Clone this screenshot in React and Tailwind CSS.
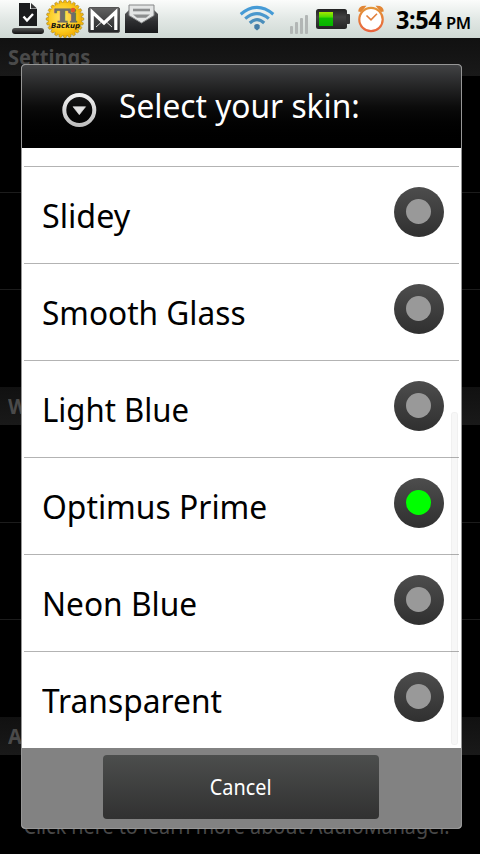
import { useState } from 'react';

const skins = [
  { name: 'Slidey', fit: 'scale-x-[0.978]' },
  { name: 'Smooth Glass', fit: 'scale-x-[0.958]' },
  { name: 'Light Blue', fit: 'scale-x-[0.942]' },
  { name: 'Optimus Prime', fit: 'scale-x-[0.964]' },
  { name: 'Neon Blue', fit: 'scale-x-[0.96]' },
  { name: 'Transparent', fit: 'scale-x-[0.962]' }
];

const DownloadIcon = () => (
  <svg width="34" height="34" viewBox="0 0 34 34">
    <defs>
      <linearGradient id="tray" x1="0" y1="0" x2="0" y2="1">
        <stop offset="0" stopColor="#555" />
        <stop offset="1" stopColor="#111" />
      </linearGradient>
    </defs>
    <path d="M8 3h11v6h7v17H8z" fill="#1b1c1e" />
    <path d="M20 3l6 5.5h-6z" fill="#333" />
    <path d="M12.5 16.5l3.5 4 6-6.5" fill="none" stroke="#fff" strokeWidth="2.4" />
    <rect x="1" y="28" width="32" height="6" rx="3" fill="url(#tray)" />
  </svg>
);

const gearTeeth = Array.from({ length: 24 }, (_, i) => i * 15);

const BackupIcon = () => (
  <svg width="40" height="38" viewBox="0 0 40 38">
    <defs>
      <radialGradient id="gold" cx="0.4" cy="0.45" r="0.65">
        <stop offset="0" stopColor="#ffe568" />
        <stop offset="0.65" stopColor="#fbc91c" />
        <stop offset="1" stopColor="#f1a900" />
      </radialGradient>
    </defs>
    {gearTeeth.map(a => (
      <path key={a} d="M18 3l1-2.8h2l1 2.8z" fill="#f6b90b" stroke="#9b7a19" strokeWidth="0.5" transform={`rotate(${a} 20 19)`} />
    ))}
    <circle cx="20" cy="19" r="16.5" fill="url(#gold)" />
    <text x="20.5" y="21.5" textAnchor="middle" fontFamily="'Liberation Serif', serif" fontWeight="bold" fontSize="18.5" textLength="22" lengthAdjust="spacingAndGlyphs" fill="#6e6e6a" stroke="#6e6e6a" strokeWidth="1.1">Ti</text>
    <circle cx="28" cy="10" r="2.3" fill="#e0542f" />
    <text x="20.5" y="27.5" textAnchor="middle" fontFamily="'DejaVu Sans', sans-serif" fontWeight="bold" fontStyle="italic" fontSize="7" textLength="29" lengthAdjust="spacingAndGlyphs" fill="#111">Backup</text>
  </svg>
);

const MailIcon = () => (
  <svg width="32" height="26" viewBox="0 0 32 26">
    <defs>
      <linearGradient id="mail" x1="0" y1="0" x2="0" y2="1">
        <stop offset="0" stopColor="#626262" />
        <stop offset="1" stopColor="#252628" />
      </linearGradient>
    </defs>
    <rect x="0.5" y="0.5" width="31" height="25" rx="1.5" fill="url(#mail)" stroke="#555" />
    <path d="M4.2 23V5l11.8 11L27.8 5v18" fill="none" stroke="#fff" strokeWidth="3.2" />
    <path d="M8 20l5-4.5M24 20l-5-4.5" stroke="#ddd" strokeWidth="1" />
  </svg>
);

const InboxIcon = () => (
  <svg width="33" height="29" viewBox="0 0 33 29">
    <defs>
      <linearGradient id="inbox" x1="0" y1="0" x2="0" y2="1">
        <stop offset="0" stopColor="#5b5c5e" />
        <stop offset="0.5" stopColor="#2d2e30" />
        <stop offset="1" stopColor="#18191b" />
      </linearGradient>
    </defs>
    <path d="M0 10l4-4h25l4 4v19H0z" fill="url(#inbox)" />
    <path d="M4 1h25v10.5L16.5 19 4 11.5z" fill="#e3e5e5" stroke="#858788" strokeWidth="1" />
    <path d="M8 6h17" stroke="#8b8d8e" strokeWidth="2.6" />
    <path d="M8 10.5h17l-4 3.2h-9z" fill="#8b8d8e" />
  </svg>
);

const WifiIcon = () => (
  <svg width="36" height="26" viewBox="0 0 36 26">
    <g fill="none" strokeWidth="3.1">
      <path d="M1.7 9.2Q18 -4.5 34.3 9.2" stroke="#459bd6" />
      <path d="M6.2 13.7Q18 3.5 29.8 13.7" stroke="#4b98cd" />
      <path d="M10.8 18Q18 11.2 25.2 18" stroke="#4b8ebb" />
    </g>
    <path d="M15.3 20.2q2.7-2.2 5.4 0v3L18 25.4l-2.7-2.2z" fill="#457da7" />
  </svg>
);

const SignalIcon = () => (
  <svg width="19" height="19" viewBox="0 0 19 19" fill="#b2b6b5">
    <rect x="0" y="11" width="3" height="8" rx="1" />
    <rect x="5" y="7" width="3" height="12" rx="1" />
    <rect x="10" y="3" width="3" height="16" rx="1" />
    <rect x="15" y="0" width="3" height="19" rx="1" />
  </svg>
);

const BatteryIcon = () => (
  <svg width="34" height="20" viewBox="0 0 34 20">
    <defs>
      <linearGradient id="shell" x1="0" y1="0" x2="0" y2="1">
        <stop offset="0" stopColor="#222" />
        <stop offset="0.4" stopColor="#414141" />
        <stop offset="1" stopColor="#242424" />
      </linearGradient>
      <linearGradient id="charge" x1="0" y1="0" x2="0" y2="1">
        <stop offset="0" stopColor="#a4e800" />
        <stop offset="0.35" stopColor="#50dc00" />
        <stop offset="0.45" stopColor="#10c000" />
        <stop offset="1" stopColor="#06b400" />
      </linearGradient>
    </defs>
    <rect width="31" height="20" rx="2.5" fill="url(#shell)" />
    <rect x="30" y="5" width="4" height="10" rx="1" fill="#333" />
    <rect x="3" y="3" width="14" height="14" fill="url(#charge)" />
  </svg>
);

const AlarmIcon = () => (
  <svg width="28" height="28" viewBox="0 0 28 28">
    <defs>
      <linearGradient id="alarm" x1="0" y1="0" x2="0" y2="1">
        <stop offset="0" stopColor="#e39538" />
        <stop offset="1" stopColor="#e9643f" />
      </linearGradient>
    </defs>
    <path d="M1.2 6.5Q1.5 0 9.5 0.8L4 7zM26.8 6.5Q26.5 0 18.5 0.8L24 7z" fill="#e28635" />
    <circle cx="14" cy="14.5" r="11.7" fill="#fff" stroke="url(#alarm)" strokeWidth="2.2" />
    <path d="M9.5 10.5l4.5 4.3 6-6" fill="none" stroke="#e2803d" strokeWidth="1.6" />
  </svg>
);

const TitleIcon = () => (
  <svg width="36" height="36" viewBox="0 0 36 36">
    <defs>
      <linearGradient id="ring" x1="0" y1="0" x2="0" y2="1">
        <stop offset="0" stopColor="#f0f0f0" />
        <stop offset="1" stopColor="#bfbfbf" />
      </linearGradient>
    </defs>
    <circle cx="18.3" cy="18" r="15" fill="none" stroke="url(#ring)" strokeWidth="4" />
    <path d="M12 14.7h12.6L18.3 22.7z" fill="#e2e2e2" stroke="#e2e2e2" strokeWidth="0.6" strokeLinejoin="round" />
  </svg>
);

const StatusBar = () => (
  <div className="flex h-[38px] items-start bg-gradient-to-b from-[#fbfcfb] via-[#e2e8e5] to-[#cfd9d4]">
    <div className="flex items-start pl-[11px]">
      <DownloadIcon />
      <BackupIcon />
      <div className="ml-[3px] mt-[7px]"><MailIcon /></div>
      <div className="ml-[5px] mt-[4px]"><InboxIcon /></div>
    </div>
    <div className="ml-auto flex items-start">
      <div className="mt-[5px]"><WifiIcon /></div>
      <div className="ml-[15px] mt-[15px]"><SignalIcon /></div>
      <div className="ml-[7px] mt-[9px]"><BatteryIcon /></div>
      <div className="ml-[7px] mt-[5px]"><AlarmIcon /></div>
      <div className="ml-[11px] mt-[3px] flex w-[84px] items-baseline whitespace-nowrap font-bold leading-[33px] text-black">
        <span className="w-[50px] origin-left scale-x-[0.94] text-[25px] tracking-[-0.4px]">3:54</span>
        <span className="text-[16.5px] font-semibold tracking-[-0.4px]">PM</span>
      </div>
    </div>
  </div>
);

const SectionHeader = ({ children }) => (
  <div className="h-[38px] bg-gradient-to-b from-[#111] to-[#191919] pl-2 text-[21px] font-bold leading-[38px] text-[#4a4a4a]">
    <span className="inline-block origin-left scale-x-[0.955]">{children}</span>
  </div>
);

// Dimmed settings screen underneath the dialog
const SettingsBackground = () => (
  <div className="flex flex-col">
    <SectionHeader>Settings</SectionHeader>
    <div className="h-[117px] border-b border-[#1c1c1c]" />
    <div className="h-[97px] border-b border-[#1c1c1c]" />
    <div className="h-[97px]" />
    <SectionHeader>W</SectionHeader>
    <div className="h-[98px] border-b border-[#1c1c1c]" />
    <div className="h-[97px] border-b border-[#1c1c1c]" />
    <div className="h-[97px]" />
    <SectionHeader>A</SectionHeader>
    <div className="mt-[56px] origin-left scale-x-[0.94] whitespace-nowrap pl-[25px] text-[21px] leading-[30px] text-[#484848]">
      Click here to learn more about AudioManager.
    </div>
  </div>
);

const Radio = ({ checked }) => (
  <span className="mb-[7px] flex h-[50px] w-[50px] items-center justify-center rounded-full bg-gradient-to-b from-[#4d4d4d] to-[#303030]">
    <span className={`h-[25px] w-[25px] rounded-full ${checked ? 'bg-[#00ff00]' : 'bg-[#999]'}`} />
  </span>
);

const App = () => {
  const [selected, setSelected] = useState('Optimus Prime');

  return (
    <div className="relative h-[854px] w-[480px] overflow-hidden bg-black font-['Noto_Sans','Open_Sans',sans-serif]">
      <StatusBar />
      <SettingsBackground />

      {/* Dialog */}
      <div className="absolute left-[21px] top-[64px] flex h-[765px] w-[441px] flex-col overflow-hidden rounded-[4px] border border-[#969696] bg-white">
        <div className="flex h-[83px] shrink-0 items-start bg-gradient-to-b from-[#424345] via-[#0c0c0c] via-50% to-black">
          <div className="ml-[39px] mt-[27px]"><TitleIcon /></div>
          <h1 className="ml-[22px] mt-[18px] origin-left scale-x-[0.96] whitespace-nowrap text-[33px] leading-[45px] text-white">
            Select your skin:
          </h1>
        </div>

        <div className="relative h-[600px] shrink-0 px-[2px] pt-[18px]">
          {skins.map(({ name, fit }) => (
            <button
              key={name}
              onClick={() => setSelected(name)}
              className="flex h-[97px] w-full items-center justify-between border-t border-[#b3b3b3] pl-[18px] pr-[15.5px] text-left text-[33px] text-black"
            >
              <span className={`mt-[1px] origin-left whitespace-nowrap ${fit}`}>{name}</span>
              <Radio checked={selected === name} />
            </button>
          ))}
          {/* Scroll thumb */}
          <div className="absolute right-[3px] top-[264px] h-[333px] w-[7px] rounded-[3px] border border-black/3 bg-black/3" />
        </div>

        <div className="flex flex-1 items-start bg-[#828282] pl-[81px] pt-[7px]">
          <button className="h-[64px] w-[276px] rounded-[4px] bg-gradient-to-b from-[#4c4e4d] to-[#313131] pt-[2px] text-[21px] text-white">
            <span className="inline-block scale-x-[0.945]">Cancel</span>
          </button>
        </div>
      </div>
    </div>
  );
};

export default App;
